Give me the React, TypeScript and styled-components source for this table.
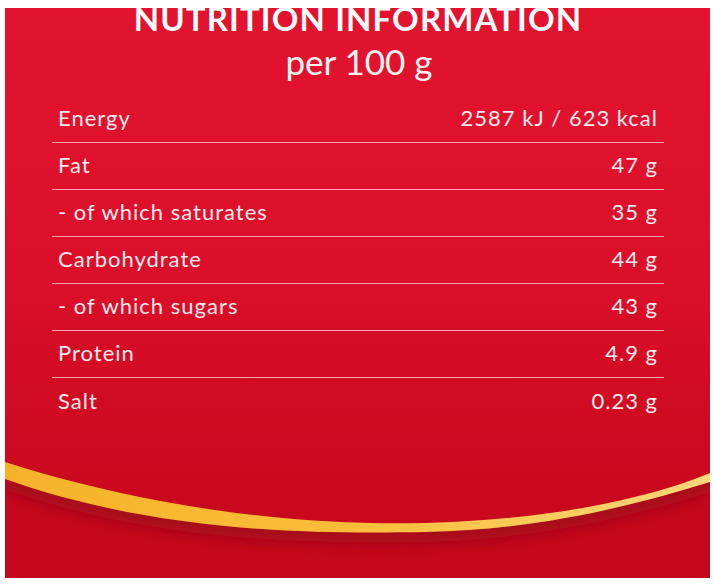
import React from "react";
import styled, { createGlobalStyle } from "styled-components";

const Global = createGlobalStyle`
  html, body { margin: 0; padding: 0; background: #ffffff; }
  body { font-family: Lato, "Open Sans", sans-serif; }
`;

const Page = styled.div`
  padding: 8px 4px 8px 5px;
`;

const Card = styled.section`
  width: 705px;
  height: 570px;
  overflow: hidden;
  display: flex;
  flex-direction: column;
  align-items: center;
  background: linear-gradient(180deg, #e3132f 0%, #dc0f2a 45%, #cb091f 80%, #c5071b 100%);
`;

const Title = styled.h1`
  margin: -6px 0 0 1px;
  font-family: Lato, sans-serif;
  font-weight: 700;
  font-size: 33px;
  line-height: 33px;
  letter-spacing: 1.1px;
  color: #ffffff;
  white-space: nowrap;
`;

const Subtitle = styled.div`
  margin-top: 9px;
  margin-left: 3px;
  font-size: 35px;
  line-height: 35px;
  font-weight: 400;
  color: #fff3f4;
`;

const Table = styled.div`
  margin-top: 17px;
  width: 612px;
  margin-left: 1px;
  display: flex;
  flex-direction: column;
`;

const Row = styled.div<{ $last?: boolean }>`
  box-sizing: border-box;
  height: 47px;
  padding: 0 6px 3px 6px;
  display: flex;
  align-items: center;
  justify-content: space-between;
  border-bottom: ${(p) => (p.$last ? "none" : "1px solid rgba(255, 214, 220, 0.75)")};
  font-size: 22px;
  letter-spacing: 1px;
  color: #fde9ec;
`;

const Label = styled.span``;
const Value = styled.span``;

const Swoosh = styled.svg`
  display: block;
  margin-top: auto;
  flex-shrink: 0;
`;

const rows: [string, string][] = [
  ["Energy", "2587 kJ / 623 kcal"],
  ["Fat", "47 g"],
  ["- of which saturates", "35 g"],
  ["Carbohydrate", "44 g"],
  ["- of which sugars", "43 g"],
  ["Protein", "4.9 g"],
  ["Salt", "0.23 g"],
];

const topEdge = "M0,22 C150,70 300,86 420,83 C540,80 640,60 705,33";
const bottomEdge = "L705,42 C640,62 540,90 420,92 C300,94 150,92 0,39 Z";
const lowerEdge = "M0,39 C150,92 300,94 420,92 C540,90 640,62 705,42";

export default function App() {
  return (
    <>
      <Global />
      <Page>
        <Card>
          <Title>NUTRITION INFORMATION</Title>
          <Subtitle>per 100 g</Subtitle>
          <Table>
            {rows.map(([l, v], i) => (
              <Row key={l} $last={i === rows.length - 1}>
                <Label>{l}</Label>
                <Value>{v}</Value>
              </Row>
            ))}
          </Table>
          <Swoosh width="705" height="138" viewBox="0 0 705 138">
            <defs>
              <linearGradient id="gold" x1="0" y1="0" x2="1" y2="0">
                <stop offset="0" stopColor="#f6b22a" />
                <stop offset="0.5" stopColor="#fbbe3a" />
                <stop offset="1" stopColor="#fdd77a" />
              </linearGradient>
              <filter id="blur" x="-0.1" y="-1" width="1.2" height="3">
                <feGaussianBlur stdDeviation="8" />
              </filter>
              <clipPath id="below">
                <path d={`${lowerEdge} L705,138 L0,138 Z`} />
              </clipPath>
            </defs>
            <path d={`${lowerEdge} L705,138 L0,138 Z`} fill="#c5071b" />
            <g clipPath="url(#below)">
              <path d={lowerEdge} stroke="#a00a1c" strokeWidth="20" fill="none" filter="url(#blur)" />
            </g>
            <path d={`${topEdge} ${bottomEdge}`} fill="url(#gold)" />
          </Swoosh>
        </Card>
      </Page>
    </>
  );
}
